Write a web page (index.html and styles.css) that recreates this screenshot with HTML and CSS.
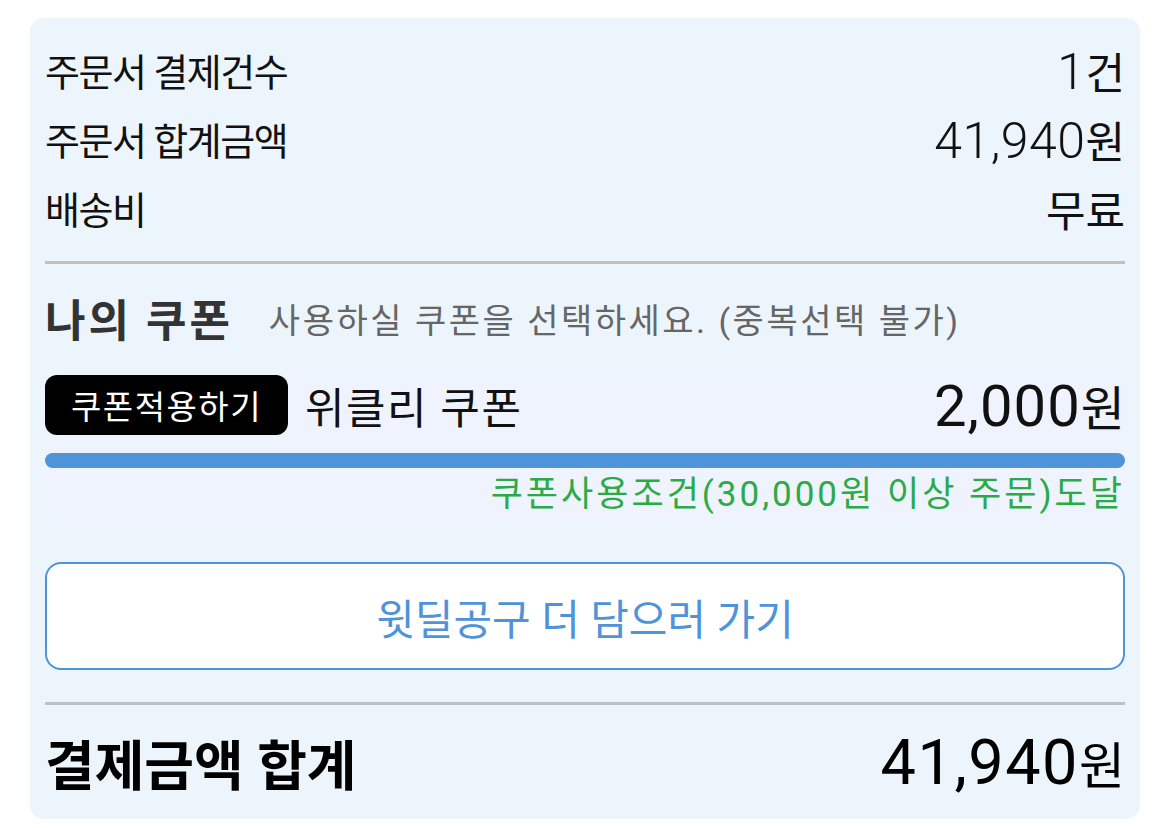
FILE: index.html
```html
<!DOCTYPE html>
<html lang="ko">

<head>
    <meta charset="UTF-8">
    <meta name="viewport" content="width=device-width, initial-scale=1.0">
    <title>결제금액</title>
    <link rel="stylesheet" href="styles.css">
</head>

<body>
    <div class="summary">
        <div class="rows">
            <div class="row">
                <span>주문서 결제건수</span>
                <span class="val"><span class="num">1</span>건</span>
            </div>
            <div class="row">
                <span>주문서 합계금액</span>
                <span class="val"><span class="num">41,940</span>원</span>
            </div>
            <div class="row">
                <span>배송비</span>
                <span class="val">무료</span>
            </div>
        </div>

        <hr class="line">

        <div class="coupon-head">
            <h2>나의 쿠폰</h2>
            <p>사용하실 쿠폰을 선택하세요. (중복선택 불가)</p>
        </div>

        <div class="coupon">
            <div class="coupon-top">
                <button class="apply" type="button">쿠폰적용하기</button>
                <span class="coupon-name">위클리 쿠폰</span>
                <span class="coupon-price"><span class="num">2,000</span>원</span>
            </div>
            <div class="bar"></div>
            <p class="reached">쿠폰사용조건(30,000원 이상 주문)도달</p>
        </div>

        <button class="more" type="button">윗딜공구 더 담으러 가기</button>

        <hr class="line line2">

        <div class="total">
            <span>결제금액 합계</span>
            <span class="total-price"><span class="num">41,940</span>원</span>
        </div>
    </div>
</body>

</html>
```

FILE: styles.css
```css
* {
    box-sizing: border-box;
}

body {
    margin: 0;
    padding: 18px 30px;
    background: white;
    font-family: Roboto, "Noto Sans CJK KR", sans-serif;
    color: #111;
}

.summary {
    background: #EDF5FC;
    border-radius: 14px;
    padding: 17px 15px 22px 15px;
}

.row {
    display: flex;
    justify-content: space-between;
    align-items: center;
    height: 69px;
    font-size: 38px;
    letter-spacing: -1.5px;
}

.val {
    font-size: 43px;
    letter-spacing: 0;
}

.num {
    font-size: 50px;
    font-weight: 300;
    letter-spacing: 0.5px;
}

.line {
    border: 0;
    height: 3px;
    background: #C0C0C0;
    margin: 19px 0 0 0;
}

.coupon-head {
    display: flex;
    align-items: center;
    height: 56px;
    margin-top: 26px;
    gap: 36px;
}

.coupon-head h2 {
    margin: 0;
    font-size: 44px;
    font-weight: 700;
    color: #333;
    letter-spacing: 3px;
}

.coupon-head p {
    margin: 0;
    font-size: 34px;
    color: #666;
    letter-spacing: 2.5px;
}

.coupon {
    margin-top: 29px;
    background: #EEF3FD;
    border-radius: 0 0 16px 16px;
    padding-bottom: 4px;
}

.coupon-top {
    display: flex;
    align-items: center;
    height: 60px;
}

.apply {
    height: 60px;
    width: 243px;
    border: 0;
    border-radius: 12px;
    background: black;
    color: white;
    font-family: inherit;
    font-size: 33px;
    letter-spacing: 1.5px;
    padding: 0;
}

.coupon-name {
    margin-left: 17px;
    font-size: 43px;
    letter-spacing: 1.5px;
    flex: 1;
}

.coupon-price {
    font-size: 48px;
}

.coupon-price .num {
    font-size: 58px;
    font-weight: 400;
    letter-spacing: 1px;
}

.bar {
    height: 15px;
    border-radius: 8px;
    background: #4F94D8;
    margin-top: 18px;
}

.reached {
    margin: 0;
    text-align: right;
    font-size: 35px;
    line-height: 54px;
    color: #2BAA48;
    letter-spacing: 3px;
}

.more {
    display: block;
    width: 100%;
    height: 108px;
    margin-top: 36px;
    background: white;
    border: 2px solid #4F94D8;
    border-radius: 16px;
    color: #4F94D8;
    font-family: inherit;
    font-size: 42px;
}

.line2 {
    margin-top: 32px;
}

.total {
    display: flex;
    justify-content: space-between;
    align-items: center;
    height: 70px;
    margin-top: 22px;
    font-size: 54px;
    font-weight: 700;
    color: black;
}

.total-price {
    font-size: 50px;
    font-weight: 400;
}

.total-price .num {
    font-size: 63px;
    font-weight: 400;
    letter-spacing: 1.5px;
}
```
